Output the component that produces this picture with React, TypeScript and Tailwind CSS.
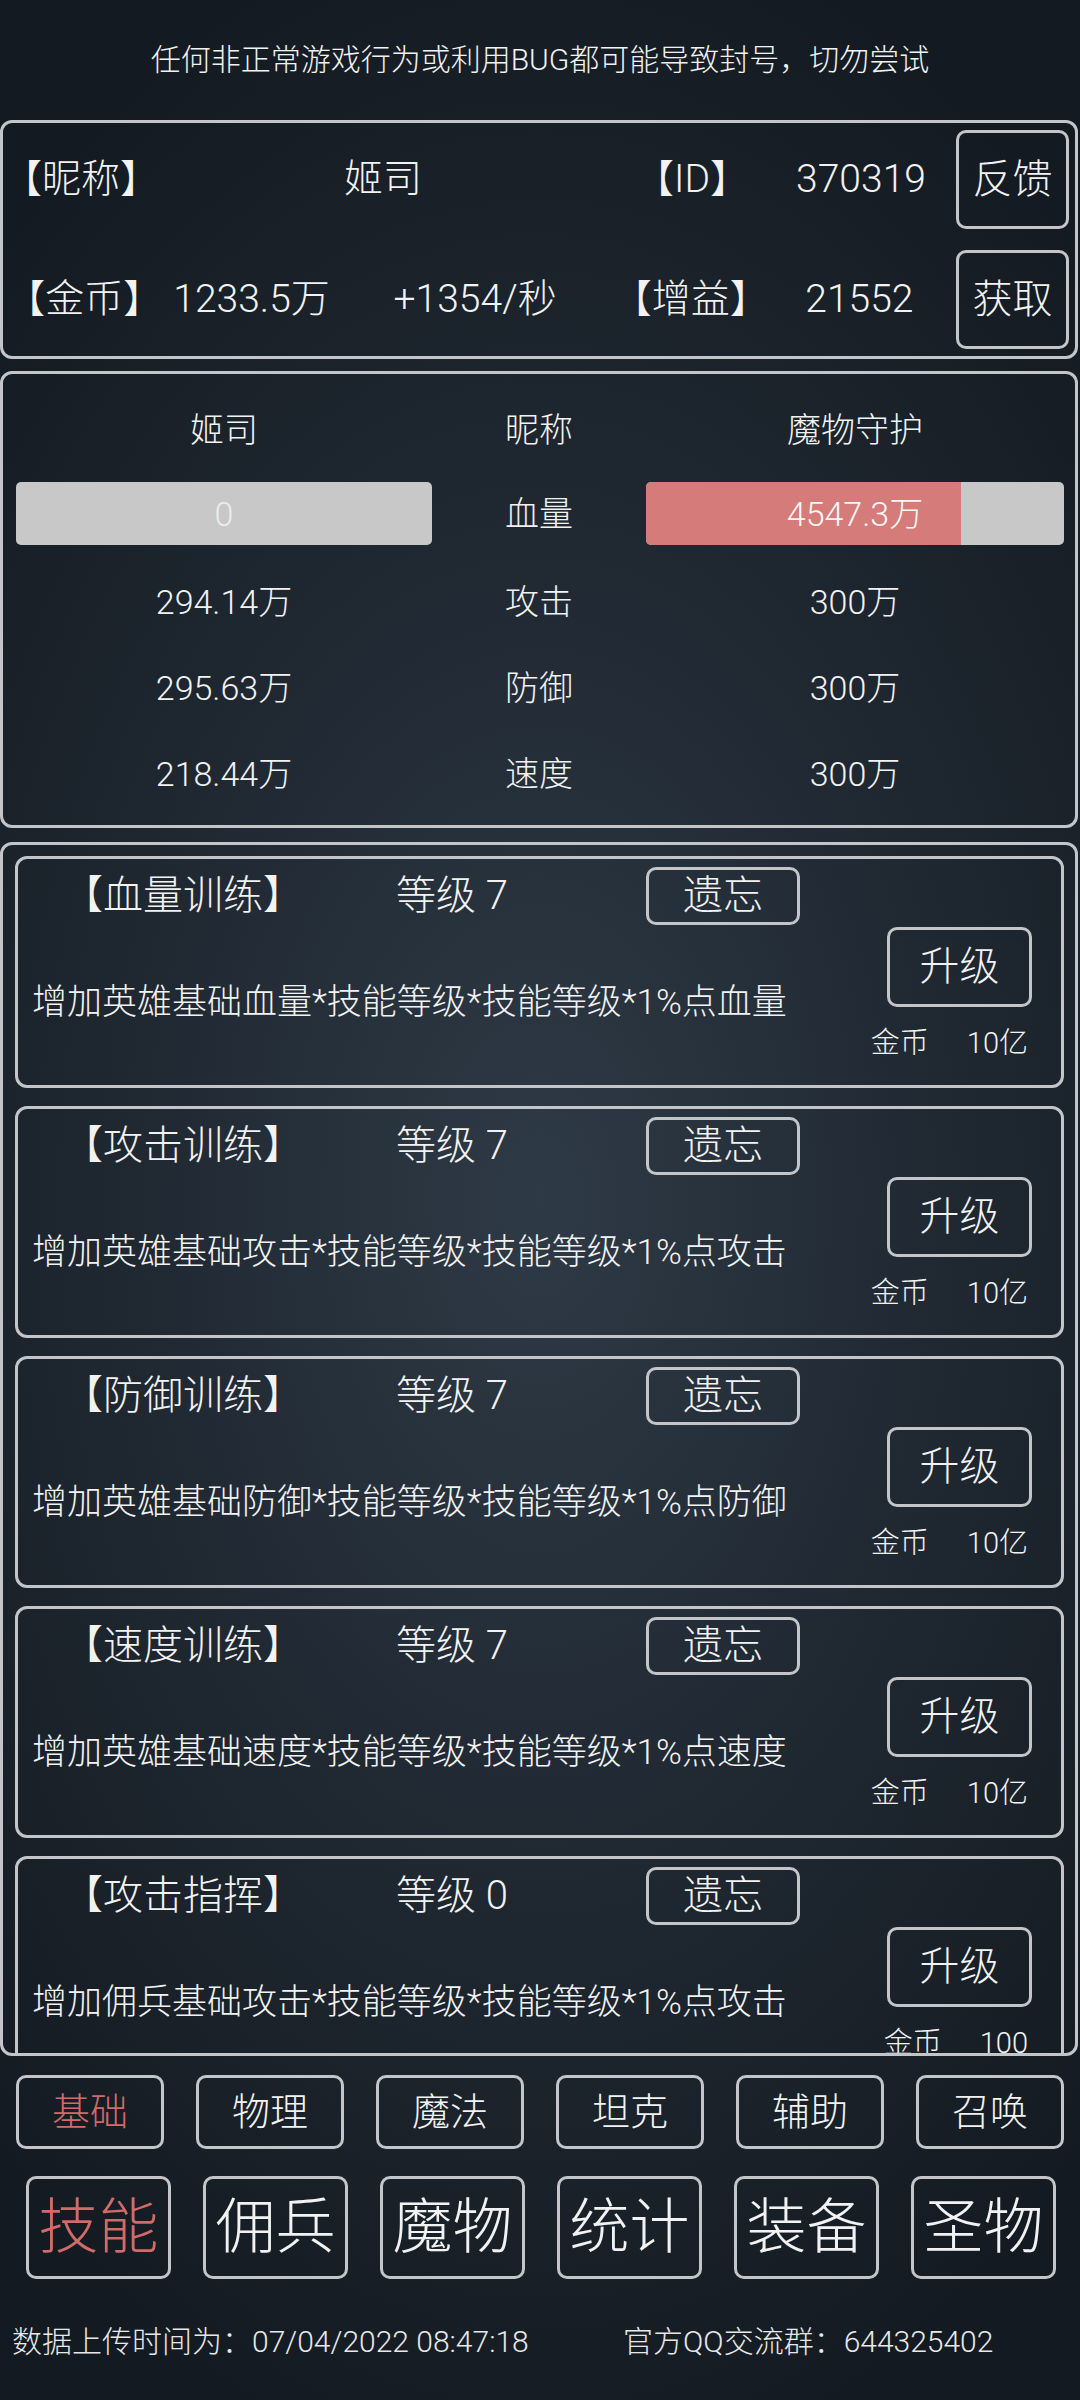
import React from 'react';

interface Skill {
  name: string;
  level: number;
  desc: string;
  cost: string;
}

const skills: Skill[] = [
  { name: '血量训练', level: 7, desc: '增加英雄基础血量*技能等级*技能等级*1%点血量', cost: '10亿' },
  { name: '攻击训练', level: 7, desc: '增加英雄基础攻击*技能等级*技能等级*1%点攻击', cost: '10亿' },
  { name: '防御训练', level: 7, desc: '增加英雄基础防御*技能等级*技能等级*1%点防御', cost: '10亿' },
  { name: '速度训练', level: 7, desc: '增加英雄基础速度*技能等级*技能等级*1%点速度', cost: '10亿' },
  { name: '攻击指挥', level: 0, desc: '增加佣兵基础攻击*技能等级*技能等级*1%点攻击', cost: '100' },
];

const stats = [
  { left: '294.14万', label: '攻击', right: '300万' },
  { left: '295.63万', label: '防御', right: '300万' },
  { left: '218.44万', label: '速度', right: '300万' },
];

const categories = ['基础', '物理', '魔法', '坦克', '辅助', '召唤'];
const tabs = ['技能', '佣兵', '魔物', '统计', '装备', '圣物'];

const panel = 'border-[3px] border-[#c3c5c8] rounded-[12px]';
const btn = 'border-[3px] border-[#c3c5c8] rounded-[10px] flex items-center justify-center leading-none';

function SkillCard({ skill }: { skill: Skill }) {
  return (
    <div className={`${panel} h-[232px] shrink-0 flex flex-col`}>
      {/* title row */}
      <div className="flex items-center h-[58px] mt-[8px] text-[40px] leading-none">
        <span className="w-[330px] text-center">【{skill.name}】</span>
        <span className="w-[298px] pl-[48px]">等级 {skill.level}</span>
        <div className={`${btn} w-[154px] h-[58px] text-[40px]`}>遗忘</div>
      </div>
      <div className="flex flex-1">
        <div className="flex-1 pl-[14px] pt-[58px] text-[35px] leading-[40px] whitespace-nowrap">{skill.desc}</div>
        <div className="flex flex-col items-end pr-[29px] pt-[2px]">
          <div className={`${btn} w-[145px] h-[80px] text-[40px]`}>升级</div>
          <div className="flex items-center gap-[38px] mt-[18px] mr-[4px] text-[29px] leading-[36px]">
            <span>金币</span>
            <span>{skill.cost}</span>
          </div>
        </div>
      </div>
    </div>
  );
}

export default function App() {
  return (
    <div className="w-[1080px] h-[2400px] overflow-hidden font-light text-[#f2f2f2] font-['Roboto','Noto_Sans_CJK_SC',sans-serif] bg-[radial-gradient(ellipse_75%_55%_at_50%_50%,#2e3a46_0%,#1d252e_60%,#131a21_100%)]">
      {/* warning */}
      <div className="h-[120px] flex items-center justify-center text-[30px] leading-none">
        任何非正常游戏行为或利用BUG都可能导致封号，切勿尝试
      </div>

      {/* player info */}
      <div className={`${panel} w-[1078px] h-[239px] flex flex-col gap-[21px] pt-[7px] pr-[6px]`}>
        <div className="flex items-center h-[99px] text-[39px] leading-none">
          <span className="w-[155px] text-center">【昵称】</span>
          <span className="w-[450px] text-center">姬司</span>
          <span className="w-[168px] text-center">【ID】</span>
          <span className="w-[170px] text-center">370319</span>
          <div className={`${btn} ml-auto w-[113px] h-[99px] text-[40px]`}>反馈</div>
        </div>
        <div className="flex items-center h-[99px] text-[39px] leading-none">
          <span className="w-[163px] text-center">【金币】</span>
          <span className="w-[172px] text-center">1233.5万</span>
          <span className="w-[276px] text-center">+1354/秒</span>
          <span className="w-[150px] text-center">【增益】</span>
          <span className="w-[194px] text-center">21552</span>
          <div className={`${btn} ml-auto w-[113px] h-[99px] text-[40px]`}>获取</div>
        </div>
      </div>

      {/* battle stats */}
      <div className={`${panel} w-[1078px] h-[457px] mt-[12px] pl-[13px] pr-[11px] pt-[18px] text-[34px] leading-none`}>
        <div className="grid grid-cols-[416px_214px_418px] h-[76px] items-center text-center">
          <span>姬司</span>
          <span>昵称</span>
          <span>魔物守护</span>
        </div>
        <div className="grid grid-cols-[416px_214px_418px] h-[63px] mt-[14px] items-center text-center">
          <div className="h-[63px] rounded-[5px] bg-[#c8c8c8] flex items-center justify-center text-[#ececec]">0</div>
          <span>血量</span>
          <div className="relative h-[63px] rounded-[5px] bg-[#c8c8c8] overflow-hidden">
            <div className="absolute inset-y-0 left-0 bg-[#d57b7a]" style={{ width: '75.4%' }} />
            <div className="relative h-full flex items-center justify-center text-[#f7f7f7]">4547.3万</div>
          </div>
        </div>
        <div className="mt-[14px]">
          {stats.map((s) => (
            <div key={s.label} className="grid grid-cols-[416px_214px_418px] h-[86px] items-center text-center">
              <span>{s.left}</span>
              <span>{s.label}</span>
              <span>{s.right}</span>
            </div>
          ))}
        </div>
      </div>

      {/* skills list */}
      <div className={`${panel} w-[1078px] h-[1214px] mt-[14px] overflow-hidden pt-[11px] pl-[12px] pr-[11px] flex flex-col gap-[18px]`}>
        {skills.map((s) => (
          <SkillCard key={s.name} skill={s} />
        ))}
      </div>

      {/* category row */}
      <div className="flex gap-[32px] pl-[16px] mt-[19px]">
        {categories.map((c, i) => (
          <div
            key={c}
            className={`${btn} w-[148px] h-[74px] text-[38px] ${i === 0 ? 'text-[#d26a69]' : ''}`}
          >
            {c}
          </div>
        ))}
      </div>

      {/* main tabs */}
      <div className="flex gap-[32px] pl-[26px] mt-[27px]">
        {tabs.map((t, i) => (
          <div
            key={t}
            className={`${btn} w-[145px] h-[103px] text-[60px] ${i === 0 ? 'text-[#d26a69]' : ''}`}
          >
            {t}
          </div>
        ))}
      </div>

      {/* footer */}
      <div className="flex items-center pl-[12px] mt-[45px] h-[36px] text-[30px] leading-none text-[#e8e8e8] whitespace-nowrap">
        <span className="w-[611px]">数据上传时间为：07/04/2022 08:47:18</span>
        <span>官方QQ交流群：644325402</span>
      </div>
    </div>
  );
}
